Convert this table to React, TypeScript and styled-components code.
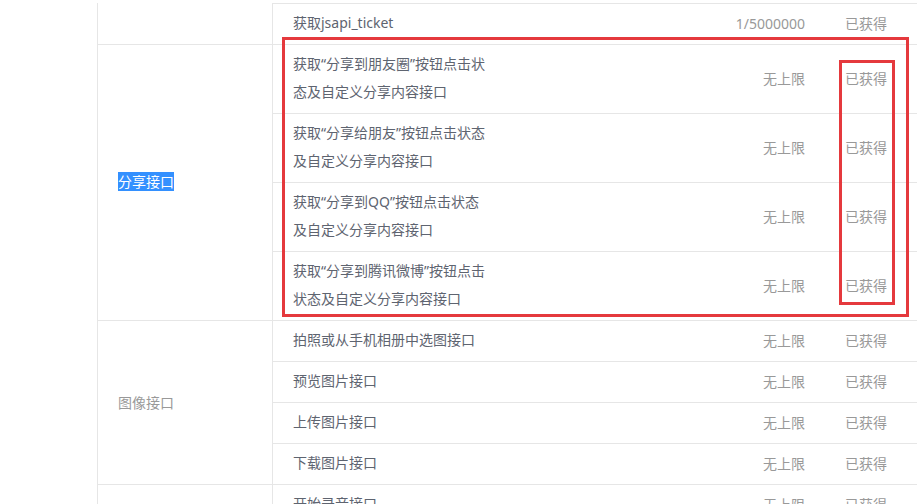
import React from 'react';
import styled, { createGlobalStyle } from 'styled-components';

const GlobalStyle = createGlobalStyle`
  html, body {
    margin: 0;
    padding: 0;
    background: #fff;
    overflow: hidden;
  }
  body {
    font-family: "Noto Sans", "Noto Sans CJK SC", sans-serif;
    font-size: 14px;
  }
`;

const Page = styled.div`
  position: relative;
  width: 917px;
  height: 504px;
  padding: 3px 0 0 97px;
  box-sizing: border-box;
  overflow: hidden;
`;

const Table = styled.div`
  width: 829px;
  border-left: 1px solid #e6e6e6;
  border-right: 1px solid #e6e6e6;
`;

const Group = styled.div`
  display: grid;
  grid-template-columns: 175px 1fr;
  border-bottom: 1px solid #e6e6e6;
`;

const Category = styled.div<{ $muted?: boolean }>`
  display: flex;
  align-items: center;
  padding: 0 0 2px 20px;
  border-right: 1px solid #e6e6e6;
  color: ${p => (p.$muted ? '#999' : '#5a6270')};
`;

const Selected = styled.span`
  background: #3390ff;
  color: #fff;
  line-height: 19px;
`;

const Rows = styled.div`
  display: flex;
  flex-direction: column;
`;

const Row = styled.div<{ $lead?: boolean }>`
  display: grid;
  grid-template-columns: 1fr 160px 102px;
  align-items: center;
  min-height: 40px;
  border-top: 1px solid #e6e6e6;
  &:first-child {
    border-top: ${p => (p.$lead ? '1px solid #e6e6e6' : 'none')};
  }
`;

const Name = styled.div<{ $tall?: boolean }>`
  padding: ${p => (p.$tall ? '5px 20px 7px' : '0 20px 2px')};
  line-height: 28px;
  color: #5e6470;
  white-space: nowrap;
`;

const Quota = styled.div`
  padding: 0 20px 2px 0;
  text-align: right;
  color: #999;
`;

const Status = styled.div`
  padding: 0 0 2px 20px;
  color: #999;
`;

const Mark = styled.div<{ $x: number; $y: number; $w: number; $h: number }>`
  position: absolute;
  left: ${p => p.$x}px;
  top: ${p => p.$y}px;
  width: ${p => p.$w}px;
  height: ${p => p.$h}px;
  border: 3px solid #e5393d;
  box-sizing: border-box;
  pointer-events: none;
`;

type Item = { name: string[]; quota: string };

const ApiRow = ({ item, lead }: { item: Item; lead?: boolean }) => (
  <Row $lead={lead}>
    <Name $tall={item.name.length > 1}>
      {item.name.map((line, i) => (
        <div key={i}>{line}</div>
      ))}
    </Name>
    <Quota>{item.quota}</Quota>
    <Status>已获得</Status>
  </Row>
);

const share: Item[] = [
  { name: ['获取“分享到朋友圈”按钮点击状', '态及自定义分享内容接口'], quota: '无上限' },
  { name: ['获取“分享给朋友”按钮点击状态', '及自定义分享内容接口'], quota: '无上限' },
  { name: ['获取“分享到QQ”按钮点击状态', '及自定义分享内容接口'], quota: '无上限' },
  { name: ['获取“分享到腾讯微博”按钮点击', '状态及自定义分享内容接口'], quota: '无上限' },
];

const image: Item[] = [
  { name: ['拍照或从手机相册中选图接口'], quota: '无上限' },
  { name: ['预览图片接口'], quota: '无上限' },
  { name: ['上传图片接口'], quota: '无上限' },
  { name: ['下载图片接口'], quota: '无上限' },
];

export default function App() {
  return (
    <>
      <GlobalStyle />
      <Page>
        <Table>
          <Group>
            <Category />
            <Rows>
              <ApiRow lead item={{ name: ['获取jsapi_ticket'], quota: '1/5000000' }} />
            </Rows>
          </Group>
          <Group>
            <Category>
              <Selected>分享接口</Selected>
            </Category>
            <Rows>
              {share.map((it, i) => (
                <ApiRow key={i} item={it} />
              ))}
            </Rows>
          </Group>
          <Group>
            <Category $muted>图像接口</Category>
            <Rows>
              {image.map((it, i) => (
                <ApiRow key={i} item={it} />
              ))}
            </Rows>
          </Group>
          <Group>
            <Category />
            <Rows>
              <ApiRow item={{ name: ['开始录音接口'], quota: '无上限' }} />
            </Rows>
          </Group>
        </Table>
        <Mark $x={282} $y={37} $w={627} $h={280} />
        <Mark $x={839} $y={60} $w={56} $h={245} />
      </Page>
    </>
  );
}
